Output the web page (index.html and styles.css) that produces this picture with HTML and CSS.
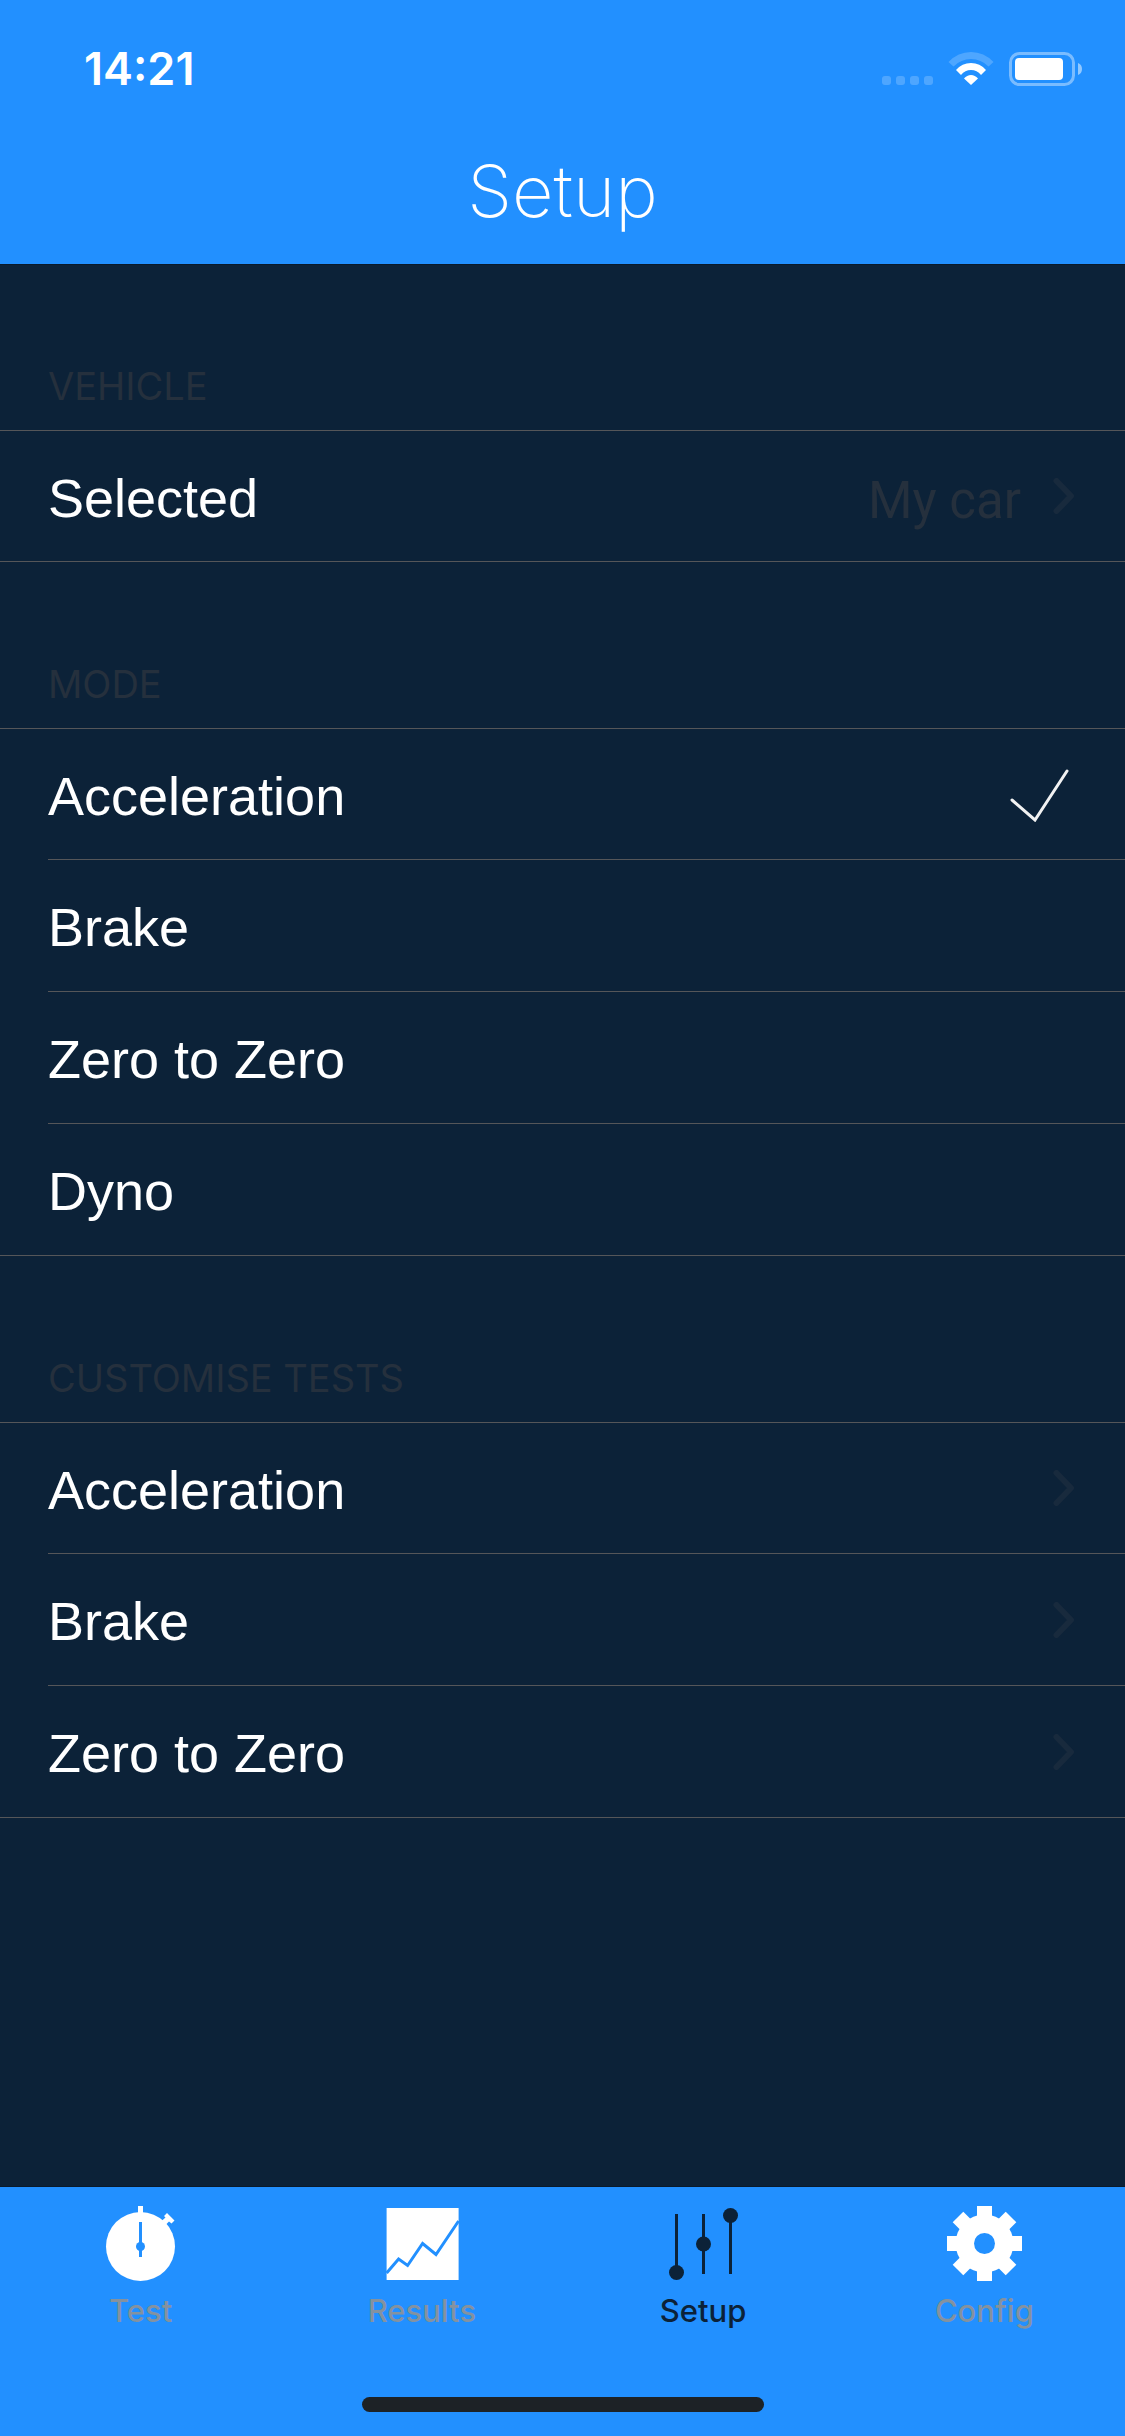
FILE: index.html
```html
<!DOCTYPE html>
<html lang="en">
<head>
    <meta charset="UTF-8">
    <meta name="viewport" content="width=device-width, initial-scale=1.0">
    <title>Setup</title>
    <link rel="stylesheet" href="styles.css">
</head>
<body>
    <header class="header">
        <div class="status">
            <span class="time">14:21</span>
            <div class="status-icons">
                <svg class="signal" width="51" height="34" viewBox="0 0 51 34" fill="#fff" opacity="0.2">
                    <rect x="0" y="24" width="9" height="9" rx="3"/>
                    <rect x="14" y="24" width="9" height="9" rx="3"/>
                    <rect x="28" y="24" width="9" height="9" rx="3"/>
                    <rect x="42" y="24" width="9" height="9" rx="3"/>
                </svg>
                <svg class="wifi" width="46" height="34" viewBox="0 0 46 34" fill="#fff">
                    <path opacity="0.2" d="M0.5 10 Q10 0 23 0 Q36 0 45.500 10 L40.500 14.500 Q33 7 23 7 Q13 7 5.500 14.500 Z"/>
                    <path d="M8 18 Q14 11 23 11 Q32 11 38 18 L33 23 Q29 18 23 18 Q17 18 13 23 Z"/>
                    <path d="M16 26.500 Q19 23 23 23 Q27 23 30 26.500 L23 33 Z"/>
                </svg>
                <svg class="battery" width="73" height="34" viewBox="0 0 73 34">
                    <rect x="1.500" y="1.500" width="63" height="31" rx="9" fill="none" stroke="#fff" stroke-width="3" opacity="0.4"/>
                    <rect x="6" y="6" width="48" height="22" rx="4" fill="#fff"/>
                    <path d="M69 11 Q73 12.500 73 17 Q73 21.500 69 23 Z" fill="#fff" opacity="0.5"/>
                </svg>
            </div>
        </div>
        <h1 class="title">Setup</h1>
    </header>

    <main class="content">
        <!-- Vehicle -->
        <section>
            <h2 class="section-title">VEHICLE</h2>
            <ul class="list">
                <li><a class="row" href="#vehicle">
                    <span class="label">Selected</span>
                    <span class="value">My car</span>
                    <svg class="chevron" width="22" height="36" viewBox="0 0 22 36"><path d="M3.500 3 L18 18 L3.500 33"/></svg>
                </a></li>
            </ul>
        </section>

        <!-- Mode -->
        <section>
            <h2 class="section-title">MODE</h2>
            <ul class="list">
                <li><label class="row">
                    <span class="label">Acceleration</span>
                    <input type="radio" name="mode" value="acceleration" checked>
                    <svg class="check" width="60" height="56" viewBox="0 0 60 56"><path d="M3 34 L26 54 L58 5"/></svg>
                </label></li>
                <li><label class="row">
                    <span class="label">Brake</span>
                    <input type="radio" name="mode" value="brake">
                    <svg class="check" width="60" height="56" viewBox="0 0 60 56"><path d="M3 34 L26 54 L58 5"/></svg>
                </label></li>
                <li><label class="row">
                    <span class="label">Zero to Zero</span>
                    <input type="radio" name="mode" value="zero">
                    <svg class="check" width="60" height="56" viewBox="0 0 60 56"><path d="M3 34 L26 54 L58 5"/></svg>
                </label></li>
                <li><label class="row">
                    <span class="label">Dyno</span>
                    <input type="radio" name="mode" value="dyno">
                    <svg class="check" width="60" height="56" viewBox="0 0 60 56"><path d="M3 34 L26 54 L58 5"/></svg>
                </label></li>
            </ul>
        </section>

        <!-- Customise tests -->
        <section>
            <h2 class="section-title">CUSTOMISE TESTS</h2>
            <ul class="list">
                <li><a class="row" href="#acceleration">
                    <span class="label">Acceleration</span>
                    <svg class="chevron" width="22" height="36" viewBox="0 0 22 36"><path d="M3.500 3 L18 18 L3.500 33"/></svg>
                </a></li>
                <li><a class="row" href="#brake">
                    <span class="label">Brake</span>
                    <svg class="chevron" width="22" height="36" viewBox="0 0 22 36"><path d="M3.500 3 L18 18 L3.500 33"/></svg>
                </a></li>
                <li><a class="row" href="#zero">
                    <span class="label">Zero to Zero</span>
                    <svg class="chevron" width="22" height="36" viewBox="0 0 22 36"><path d="M3.500 3 L18 18 L3.500 33"/></svg>
                </a></li>
            </ul>
        </section>
    </main>

    <footer class="footer">
        <nav class="tabs">
            <a class="tab" href="#test">
                <svg width="75" height="75" viewBox="0 0 75 75">
                    <g fill="#fff">
                        <circle cx="37.500" cy="40.500" r="34.500"/>
                        <rect x="35" y="0" width="5" height="10"/>
                        <path d="M64 7 L71.500 14.500 L68.500 17.500 L66 15.500 L62 19.500 L58 15.500 L62.500 11.500 L61 10 Z"/>
                    </g>
                    <g fill="#2290ff">
                        <rect x="36" y="16" width="3" height="35"/>
                        <circle cx="37.500" cy="40.500" r="4.500"/>
                    </g>
                </svg>
                <span>Test</span>
            </a>
            <a class="tab" href="#results">
                <svg width="75" height="75" viewBox="0 0 75 75">
                    <rect x="2.600" y="2" width="72" height="72" fill="#fff"/>
                    <path d="M2.600 67 L14.600 53 L23.600 59.500 L38.600 37.500 L52 48.500 L74.600 15" fill="none" stroke="#2290ff" stroke-width="3"/>
                </svg>
                <span>Results</span>
            </a>
            <a class="tab active" href="#setup">
                <svg width="75" height="75" viewBox="0 0 75 75" fill="#0c2238">
                    <rect x="9" y="8" width="3" height="60"/>
                    <rect x="36" y="8" width="3" height="60"/>
                    <rect x="63" y="8" width="3" height="60"/>
                    <circle cx="10.500" cy="66.500" r="7.500"/>
                    <circle cx="37.500" cy="38" r="7.500"/>
                    <circle cx="64.500" cy="9.500" r="7.500"/>
                </svg>
                <span>Setup</span>
            </a>
            <a class="tab" href="#config">
                <svg width="75" height="75" viewBox="0 0 75 75">
                    <g fill="#fff">
                        <circle cx="37.500" cy="37.500" r="29"/>
                        <rect x="30" y="0" width="15" height="75"/>
                        <rect x="0" y="30" width="75" height="15"/>
                        <rect x="30" y="0" width="15" height="75" transform="rotate(45 37.500 37.500)"/>
                        <rect x="30" y="0" width="15" height="75" transform="rotate(-45 37.500 37.500)"/>
                    </g>
                    <circle cx="37.500" cy="37.500" r="10.500" fill="#2290ff"/>
                </svg>
                <span>Config</span>
            </a>
        </nav>
        <div class="home-indicator"></div>
    </footer>
</body>
</html>
```

FILE: styles.css
```css
* {
    box-sizing: border-box;
}
body {
    margin: 0;
    min-height: 100vh;
    display: flex;
    flex-direction: column;
    font-family: Inter, sans-serif;
    background-color: #0c2238;
    color: white;
}
svg {
    display: block;
    flex: none;
}
a {
    color: inherit;
    text-decoration: none;
}

/* Header */
.header {
    background-color: #2290ff;
}
.status {
    display: flex;
    justify-content: space-between;
    align-items: center;
    height: 138px;
    padding: 0 43px 0 84px;
}
.time {
    font-size: 45px;
    font-weight: 600;
    line-height: 54px;
}
.status-icons {
    display: flex;
}
.wifi {
    margin: 0 15px;
}
.title {
    margin: 0;
    padding: 8px 0 28px;
    font-size: 72px;
    font-weight: 200;
    line-height: 90px;
    text-align: center;
}

/* Settings list */
.content {
    flex: 1;
    border-top: 1px solid #0a1a2b;
}
.section-title {
    display: flex;
    align-items: flex-end;
    height: 166px;
    margin: 0;
    padding: 0 48px 20px;
    font-size: 38px;
    font-weight: 400;
    line-height: 48px;
    color: #25303d;
}
section:first-child .section-title {
    height: 165px;
}
.list {
    margin: 0;
    padding: 0;
    list-style: none;
    border-top: 1px solid #555659;
    border-bottom: 1px solid #555659;
}
.list li {
    padding-left: 48px;
}
.row {
    display: flex;
    align-items: center;
    height: 130px;
    padding-right: 50px;
}
.list li + li .row {
    height: 132px;
    border-top: 1px solid #555659;
}
.label {
    flex: 1;
    padding-top: 3px;
    font-family: "Liberation Sans", Arial, sans-serif;
    font-size: 54px;
    line-height: 64px;
}
.value {
    margin-right: 32px;
    padding-top: 10px;
    font-family: Roboto, sans-serif;
    font-size: 51px;
    line-height: 62px;
    color: #25303d;
}
.chevron {
    fill: none;
    stroke: #182a3d;
    stroke-width: 6;
    stroke-linecap: round;
    stroke-linejoin: round;
}
.row input {
    appearance: none;
    width: 0;
    height: 0;
    margin: 0;
}
.check {
    display: none;
    margin-right: 6px;
    fill: none;
    stroke: #f2f2f2;
    stroke-width: 3;
    stroke-linecap: round;
}
.row input:checked + .check {
    display: block;
}

/* Tab bar */
.footer {
    background-color: #2290ff;
    border-top: 1px solid #0a1a2b;
    padding: 19px 0 24px;
}
.tabs {
    display: flex;
}
.tab {
    flex: 1;
    display: flex;
    flex-direction: column;
    align-items: center;
    gap: 12px;
    font-size: 31px;
    font-weight: 500;
    line-height: 36px;
    color: #8492a0;
}
.tab.active {
    color: #0c2238;
}
.home-indicator {
    width: 402px;
    height: 15px;
    margin: 68px auto 0;
    border-radius: 8px;
    background-color: #1d2226;
}
```
